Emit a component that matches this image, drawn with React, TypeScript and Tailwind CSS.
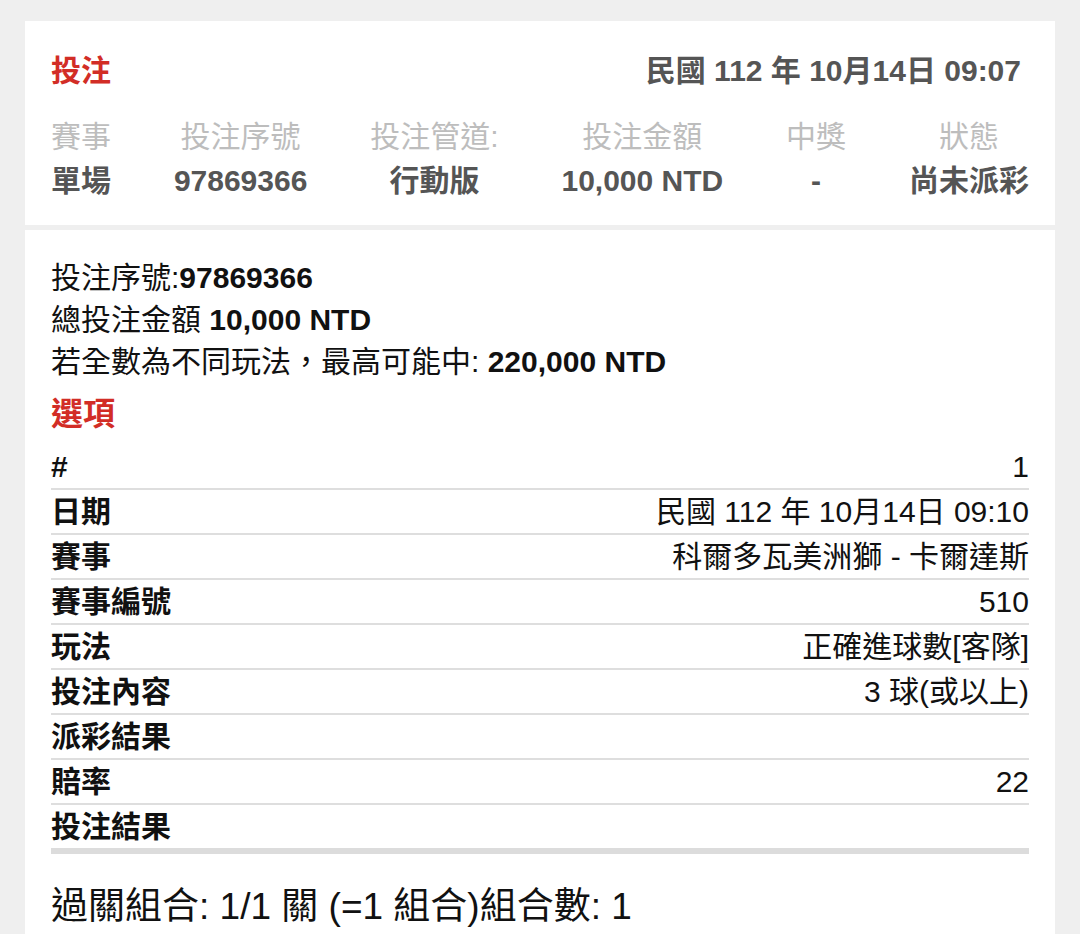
import React from "react";

const font = {
  fontFamily: '"Liberation Sans", "Noto Sans CJK TC", sans-serif',
};

const cols: { label: string; value: string; align: string }[] = [
  { label: "賽事", value: "單場", align: "items-start" },
  { label: "投注序號", value: "97869366", align: "items-center" },
  { label: "投注管道:", value: "行動版", align: "items-center" },
  { label: "投注金額", value: "10,000 NTD", align: "items-center" },
  { label: "中獎", value: "-", align: "items-center" },
  { label: "狀態", value: "尚未派彩", align: "items-center" },
];

const rows: [string, string][] = [
  ["#", "1"],
  ["日期", "民國 112 年 10月14日 09:10"],
  ["賽事", "科爾多瓦美洲獅 - 卡爾達斯"],
  ["賽事編號", "510"],
  ["玩法", "正確進球數[客隊]"],
  ["投注內容", "3 球(或以上)"],
  ["派彩結果", ""],
  ["賠率", "22"],
  ["投注結果", ""],
];

export default function App() {
  return (
    <div
      className="min-h-screen bg-[#efefef] pt-[21px] px-[25px] text-[30px]"
      style={font}
    >
      <div className="bg-white px-[26px] pt-[30px] pb-[22px]">
        <div className="flex justify-between items-center leading-[40px]">
          <span className="font-bold text-[#d22d26]">投注</span>
          <span className="font-bold text-[#555555] mr-[8px]">
            民國 112 年 10月14日 09:07
          </span>
        </div>
        <div className="flex justify-between mt-[24px]">
          {cols.map((c, i) => (
            <div
              key={i}
              className={`flex flex-col ${c.align} leading-[44px]`}
            >
              <span className="text-[#bdbdbd]">{c.label}</span>
              <span className="font-bold text-[#555555]">{c.value}</span>
            </div>
          ))}
        </div>
      </div>
      <div className="bg-white mt-[5px] px-[26px] pt-[27px] pb-[20px] text-[#111111]">
        <div className="leading-[42px]">
          投注序號:<span className="font-bold">97869366</span>
        </div>
        <div className="leading-[42px]">
          總投注金額 <span className="font-bold">10,000 NTD</span>
        </div>
        <div className="leading-[42px]">
          若全數為不同玩法，最高可能中:{" "}
          <span className="font-bold">220,000 NTD</span>
        </div>
        <div className="leading-[62px] text-[32px] font-bold text-[#d22d26]">
          選項
        </div>
        <div>
          {rows.map(([k, v], i) => (
            <div
              key={i}
              className={`flex justify-between items-center h-[43px] leading-[43px] box-content ${
                i === rows.length - 1
                  ? "border-b-[6px] border-[#dcdcdc]"
                  : "border-b-2 border-[#dedede]"
              }`}
            >
              <span className="font-bold">{k}</span>
              <span>{v}</span>
            </div>
          ))}
        </div>
        <div className="mt-[29px] text-[37px] leading-[48px]">
          過關組合: 1/1 關 (=1 組合)組合數: 1
        </div>
      </div>
    </div>
  );
}
